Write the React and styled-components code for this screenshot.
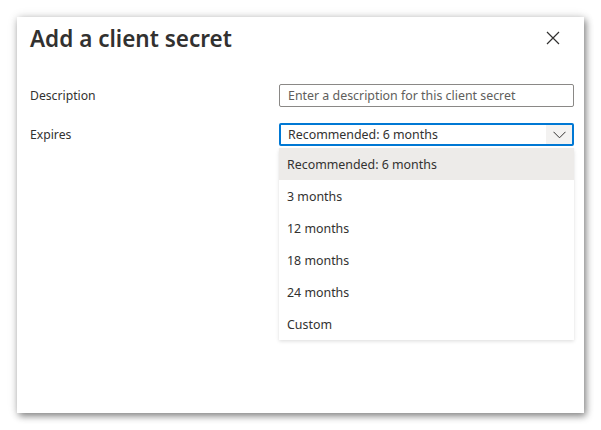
import React from 'react';
import styled, { createGlobalStyle } from 'styled-components';

const GlobalStyle = createGlobalStyle`
  html, body {
    margin: 0;
    padding: 0;
    background: #ffffff;
  }
  body {
    font-family: "Noto Sans", "Open Sans", sans-serif;
    color: #323130;
  }
`;

const Page = styled.div`
  width: 601px;
  height: 430px;
  padding: 17px 0 0 17px;
  box-sizing: border-box;
`;

const Panel = styled.div`
  width: 567px;
  height: 396px;
  background: #ffffff;
  box-shadow: 2px 3px 7px rgba(0, 0, 0, 0.45), 0 0 10px rgba(0, 0, 0, 0.12);
  box-sizing: border-box;
  padding: 0 10px 0 13px;
`;

const Header = styled.div`
  display: flex;
  align-items: center;
  justify-content: space-between;
  height: 42px;
`;

const Title = styled.h1`
  margin: 0;
  font-size: 22.5px;
  font-weight: 600;
  color: #323130;
`;

const CloseButton = styled.button`
  display: flex;
  align-items: center;
  justify-content: center;
  width: 24px;
  height: 24px;
  margin-right: 9px;
  padding: 0;
  border: none;
  background: transparent;
  color: #323130;
`;

const Form = styled.div`
  display: grid;
  grid-template-columns: 249px 1fr;
  row-gap: 16px;
  margin-top: 25px;
  align-items: center;
`;

const Label = styled.label`
  font-size: 12.2px;
  line-height: 23px;
  color: #323130;
`;

const Field = styled.div`
  position: relative;
  height: 23px;
  box-sizing: border-box;
  border: ${p => (p.$focused ? '2px solid #0078d4' : '1px solid #8a8886')};
  border-radius: 2px;
  display: flex;
  align-items: center;
  padding-left: ${p => (p.$focused ? '7px' : '8px')};
  font-size: 12.4px;
  color: ${p => (p.$placeholder ? '#605e5c' : '#323130')};
`;

const FieldText = styled.span`
  flex: 1;
  white-space: nowrap;
`;

const Chevron = styled.span`
  align-self: stretch;
  width: 26px;
  display: flex;
  align-items: center;
  justify-content: center;
  background: #f3f2f1;
`;

const Menu = styled.ul`
  position: absolute;
  top: 23px;
  left: -2px;
  right: -2px;
  margin: 0;
  padding: 0;
  list-style: none;
  background: #ffffff;
  box-shadow: 0 1.6px 3.6px rgba(0, 0, 0, 0.13), 0 0.3px 0.9px rgba(0, 0, 0, 0.11);
  z-index: 2;
`;

const Option = styled.li`
  height: 32px;
  display: flex;
  align-items: center;
  padding-left: 8px;
  font-size: 12.4px;
  color: #323130;
  background: ${p => (p.$selected ? '#edebe9' : '#ffffff')};
`;

const options = ['Recommended: 6 months', '3 months', '12 months', '18 months', '24 months', 'Custom'];

export default function App() {
  return (
    <>
      <GlobalStyle />
      <Page>
        <Panel>
          <Header>
            <Title>Add a client secret</Title>
            <CloseButton aria-label="Close">
              <svg width="14" height="14" viewBox="0 0 14 14">
                <path d="M1 1 L13 13 M13 1 L1 13" stroke="#323130" strokeWidth="1.2" fill="none" />
              </svg>
            </CloseButton>
          </Header>
          <Form>
            <Label>Description</Label>
            <Field $placeholder>
              <FieldText>Enter a description for this client secret</FieldText>
            </Field>
            <Label>Expires</Label>
            <Field $focused>
              <FieldText>Recommended: 6 months</FieldText>
              <Chevron>
                <svg width="13" height="8" viewBox="0 0 13 8">
                  <path d="M0.5 0.8 L6.5 6.8 L12.5 0.8" stroke="#323130" strokeWidth="1" fill="none" />
                </svg>
              </Chevron>
              <Menu>
                {options.map((o, i) => (
                  <Option key={o} $selected={i === 0}>{o}</Option>
                ))}
              </Menu>
            </Field>
          </Form>
        </Panel>
      </Page>
    </>
  );
}
